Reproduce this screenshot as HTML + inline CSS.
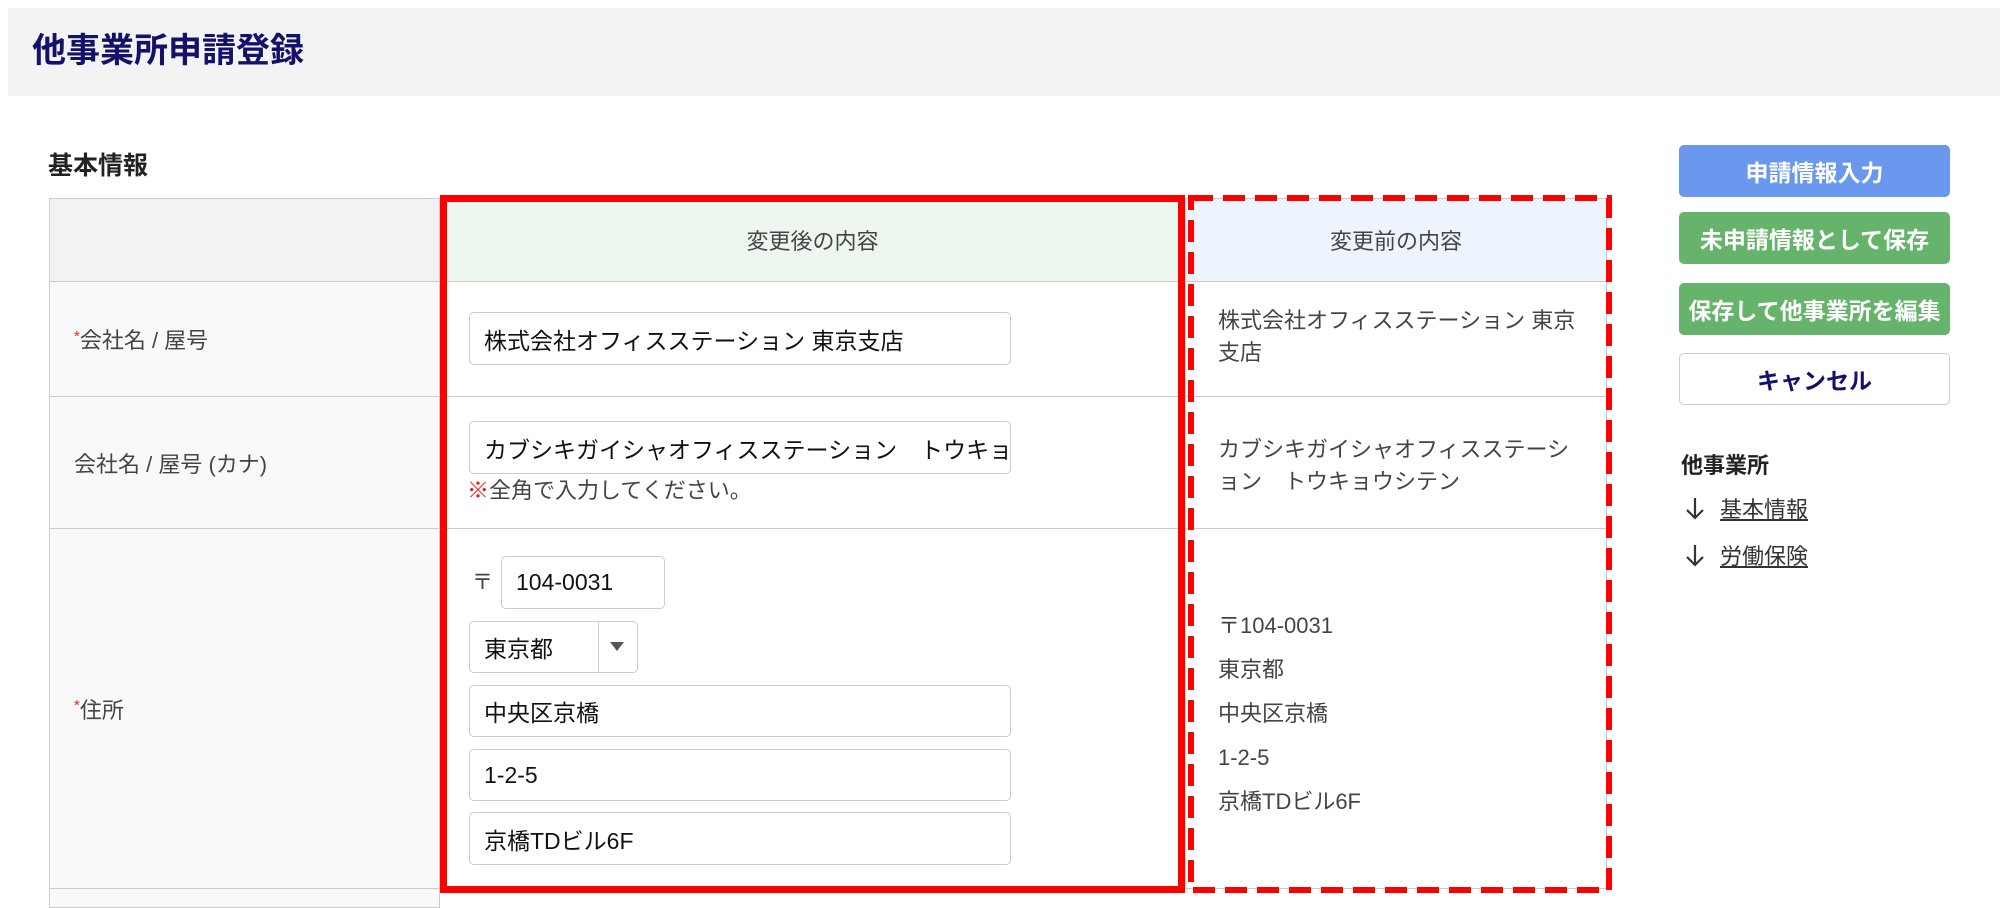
<!DOCTYPE html>
<html><head><meta charset="utf-8"><style>
*{box-sizing:border-box;margin:0;padding:0}
body{width:2000px;height:898px;overflow:hidden;background:#fff;position:relative;font-family:"Liberation Sans","Noto Sans CJK JP",sans-serif;color:#333}
.a{position:absolute}
.hdr{left:8px;top:8px;width:1992px;height:88px;background:#f3f3f3}
.title{left:32px;top:30px;font-size:34px;font-weight:bold;color:#14116b;line-height:42px}
.sec{left:48px;top:150px;font-size:25px;font-weight:bold;color:#222;line-height:32px}
.cell{position:absolute;border:1px solid #ccc;margin:-1px 0 0 -1px}
.lbl{background:#f9f9f9;font-size:22px;color:#444;display:flex;align-items:center;padding-left:24px}
.lbl i{color:#e22;font-style:normal;font-size:15px;align-self:center;margin-top:-6px}
.hc{display:flex;align-items:center;justify-content:center;font-size:22px;color:#444}
.inp{position:absolute;border:1px solid #ccc;border-radius:5px;background:#fff;font-size:23px;color:#111;display:flex;align-items:center;padding-left:14px;white-space:nowrap;overflow:hidden}
.txt{position:absolute;font-size:22px;color:#444;line-height:32px}
.btn{position:absolute;left:1679px;width:271px;height:52px;border-radius:5px;color:#fff;font-weight:bold;font-size:23px;display:flex;align-items:center;justify-content:center}
.lnk{position:absolute;left:1684px;font-size:22px;color:#333;display:flex;align-items:center}
.lnk span{text-decoration:underline;margin-left:14px}
</style></head><body>
<div class="a hdr"></div>
<div class="a title">他事業所申請登録</div>
<div class="a sec">基本情報</div>

<div class="cell" style="left:50px;top:199px;width:391px;height:84px;background:#f2f2f2"></div>
<div class="cell hc" style="left:440px;top:199px;width:747px;height:84px;background:#eef7ef">変更後の内容</div>
<div class="cell hc" style="left:1186px;top:199px;width:422px;height:84px;background:#eef4fd">変更前の内容</div>

<div class="cell lbl" style="left:50px;top:282px;width:391px;height:116px"><i>*</i>会社名 / 屋号</div>
<div class="cell" style="left:440px;top:282px;width:747px;height:116px"></div>
<div class="cell" style="left:1186px;top:282px;width:422px;height:116px"></div>

<div class="cell lbl" style="left:50px;top:397px;width:391px;height:133px">会社名 / 屋号 (カナ)</div>
<div class="cell" style="left:440px;top:397px;width:747px;height:133px"></div>
<div class="cell" style="left:1186px;top:397px;width:422px;height:133px"></div>

<div class="cell lbl" style="left:50px;top:529px;width:391px;height:361px"><i>*</i>住所</div>
<div class="cell" style="left:440px;top:529px;width:747px;height:361px"></div>
<div class="cell" style="left:1186px;top:529px;width:422px;height:361px"></div>
<div class="cell" style="left:50px;top:889px;width:391px;height:20px;background:#f9f9f9"></div>

<div class="inp" style="left:469px;top:312px;width:542px;height:53px">株式会社オフィスステーション 東京支店</div>
<div class="inp" style="left:469px;top:421px;width:542px;height:53px">カブシキガイシャオフィスステーション　トウキョウシテン</div>
<div class="a" style="left:467px;top:476px;font-size:22px;color:#444;line-height:30px"><span style="color:#e11">※</span>全角で入力してください。</div>
<div class="a" style="left:472px;top:566px;font-size:21px;color:#444">〒</div>
<div class="inp" style="left:501px;top:556px;width:164px;height:53px">104-0031</div>
<div class="inp" style="left:469px;top:621px;width:169px;height:52px">東京都</div>
<div class="a" style="left:598px;top:622px;width:1px;height:50px;background:#ccc"></div>
<div class="a" style="left:610px;top:642px;width:0;height:0;border-left:7px solid transparent;border-right:7px solid transparent;border-top:9px solid #555"></div>
<div class="inp" style="left:469px;top:685px;width:542px;height:52px">中央区京橋</div>
<div class="inp" style="left:469px;top:749px;width:542px;height:52px">1-2-5</div>
<div class="inp" style="left:469px;top:812px;width:542px;height:53px">京橋TDビル6F</div>

<div class="txt" style="left:1218px;top:305px;width:380px">株式会社オフィスステーション 東京<br>支店</div>
<div class="txt" style="left:1218px;top:434px;width:380px">カブシキガイシャオフィスステーシ<br>ョン　トウキョウシテン</div>
<div class="txt" style="left:1218px;top:604px;line-height:44px">〒104-0031<br>東京都<br>中央区京橋<br>1-2-5<br>京橋TDビル6F</div>

<div class="a" style="left:440px;top:195px;width:745px;height:698px;border:7px solid #f00"></div>
<svg class="a" style="left:1188px;top:195px" width="424" height="698"><rect x="3" y="3" width="418" height="692" fill="none" stroke="#f00" stroke-width="6" stroke-dasharray="22 10"/></svg>

<div class="btn" style="top:145px;background:#6a98ee">申請情報入力</div>
<div class="btn" style="top:212px;background:#66b46c">未申請情報として保存</div>
<div class="btn" style="top:283px;background:#66b46c">保存して他事業所を編集</div>
<div class="btn" style="top:353px;background:#fff;border:1px solid #ccc;color:#14116b">キャンセル</div>

<div class="a" style="left:1681px;top:448px;font-size:22px;font-weight:bold;color:#222">他事業所</div>
<div class="lnk" style="top:492px"><svg width="22" height="26" viewBox="0 0 22 26"><path d="M11 3V23M3 15L11 23L19 15" fill="none" stroke="#333" stroke-width="2.2"/></svg><span>基本情報</span></div>
<div class="lnk" style="top:539px"><svg width="22" height="26" viewBox="0 0 22 26"><path d="M11 3V23M3 15L11 23L19 15" fill="none" stroke="#333" stroke-width="2.2"/></svg><span>労働保険</span></div>
</body></html>
